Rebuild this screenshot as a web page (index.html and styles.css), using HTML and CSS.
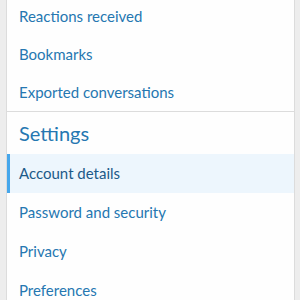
FILE: index.html
```html
<!DOCTYPE html>
<html lang="en">
<head>
    <meta charset="UTF-8">
    <title>Account</title>
    <link rel="stylesheet" href="styles.css">
</head>
<body>
    <div class="block">
        <div class="block-body">
            <a class="item" href="#">Reactions received</a>
            <a class="item" href="#">Bookmarks</a>
            <a class="item" href="#">Exported conversations</a>
        </div>
        <h3 class="minor-header">Settings</h3>
        <div class="block-body block-body--settings">
            <a class="item is-selected" href="#">Account details</a>
            <a class="item" href="#">Password and security</a>
            <a class="item" href="#">Privacy</a>
            <a class="item" href="#">Preferences</a>
        </div>
    </div>
</body>
</html>
```

FILE: styles.css
```css
body {
    margin: 0;
    background-color: #ededed;
    font-family: Lato, "Noto Sans", sans-serif;
}
.block {
    margin: -3px 0 0 6px;
    width: 287px;
    background-color: #fefefe;
    border-left: 1px solid #dcdcdc;
    border-right: 1px solid #dcdcdc;
}
.block-body {
    display: flex;
    flex-direction: column;
}
.item {
    display: block;
    height: 38px;
    line-height: 38px;
    padding: 0 9px;
    border-left: 3px solid transparent;
    font-size: 15px;
    color: #2577b1;
    text-decoration: none;
    white-space: nowrap;
}
.block-body--settings .item {
    height: 39px;
    line-height: 39px;
}
.item.is-selected {
    background-color: #edf6fd;
    border-left-color: #47a7eb;
    color: #1c5a89;
}
.minor-header {
    margin: 0;
    padding: 0 12px;
    height: 42px;
    line-height: 42px;
    border-top: 1px solid #dcdcdc;
    font-size: 20px;
    font-weight: normal;
    color: #2577b1;
}
```
